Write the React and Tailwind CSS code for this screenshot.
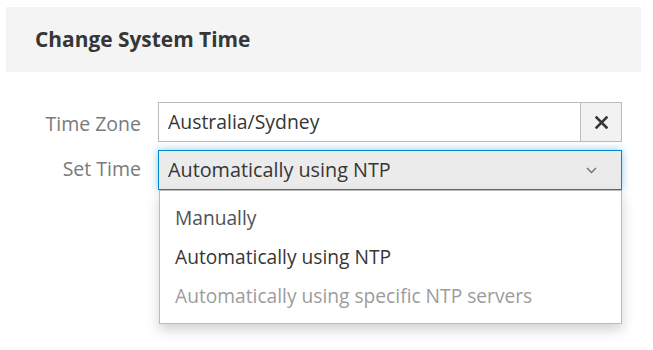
export default function App() {
  return (
    <div className="relative w-[653px] h-[350px] bg-white font-['Open_Sans',sans-serif] overflow-hidden">
      {/* Header */}
      <div className="mx-[6px] mt-[7px] w-[635px] h-[65px] bg-[#f4f4f4] flex items-center pl-[29px]">
        <h1 className="text-[20.9px] font-bold text-[#363636]">Change System Time</h1>
      </div>

      {/* Form */}
      <div className="mt-[30px] flex flex-col gap-[8px]">
        <div className="flex items-center h-[40px]">
          <label className="w-[141px] text-right text-[19.5px] text-[#7a7a7a] mt-[3px]">Time Zone</label>
          <div className="ml-[17px] flex h-[40px]">
            <div className="w-[423px] h-[40px] border border-[#bbb] bg-white flex items-center pl-[9px] text-[19.4px] text-[#363636]">
              Australia/Sydney
            </div>
            <button className="w-[41px] h-[40px] border border-l-0 border-[#bbb] bg-[#f2f2f2] flex items-center justify-center">
              <svg width="13" height="13" viewBox="0 0 13 13">
                <path d="M1.5 1.5 L11.5 11.5 M11.5 1.5 L1.5 11.5" stroke="#363636" strokeWidth="2.6" strokeLinecap="square" />
              </svg>
            </button>
          </div>
        </div>

        <div className="flex items-center h-[40px] relative">
          <label className="w-[141px] text-right text-[19.5px] text-[#7a7a7a] -mt-[3px]">Set Time</label>
          <div className="ml-[17px] relative">
            <div className="w-[464px] h-[40px] border border-[#0088ce] bg-[#ebebeb] shadow-[0_0_8px_rgba(0,136,206,0.45)] flex items-center justify-between pl-[9px] pr-[24px] text-[19.8px] text-[#363636]">
              <span>Automatically using NTP</span>
              <svg width="11" height="7" viewBox="0 0 11 7">
                <path d="M1 1 L5.5 5.5 L10 1" stroke="#6f6f6f" strokeWidth="1.4" fill="none" />
              </svg>
            </div>

            {/* Dropdown menu */}
            <div className="absolute left-[1px] top-[40px] w-[463px] h-[134px] bg-white border border-[#bbb] shadow-[0_6px_12px_rgba(0,0,0,0.18)] pt-[8px] z-10">
              <div className="h-[39px] flex items-center pl-[15px] text-[19.2px] text-[#4d5258]">Manually</div>
              <div className="h-[39px] flex items-center pl-[15px] text-[19.2px] text-[#363636]">Automatically using NTP</div>
              <div className="h-[39px] flex items-center pl-[15px] text-[19.2px] text-[#9c9c9c]">Automatically using specific NTP servers</div>
            </div>
          </div>
        </div>
      </div>
    </div>
  );
}
